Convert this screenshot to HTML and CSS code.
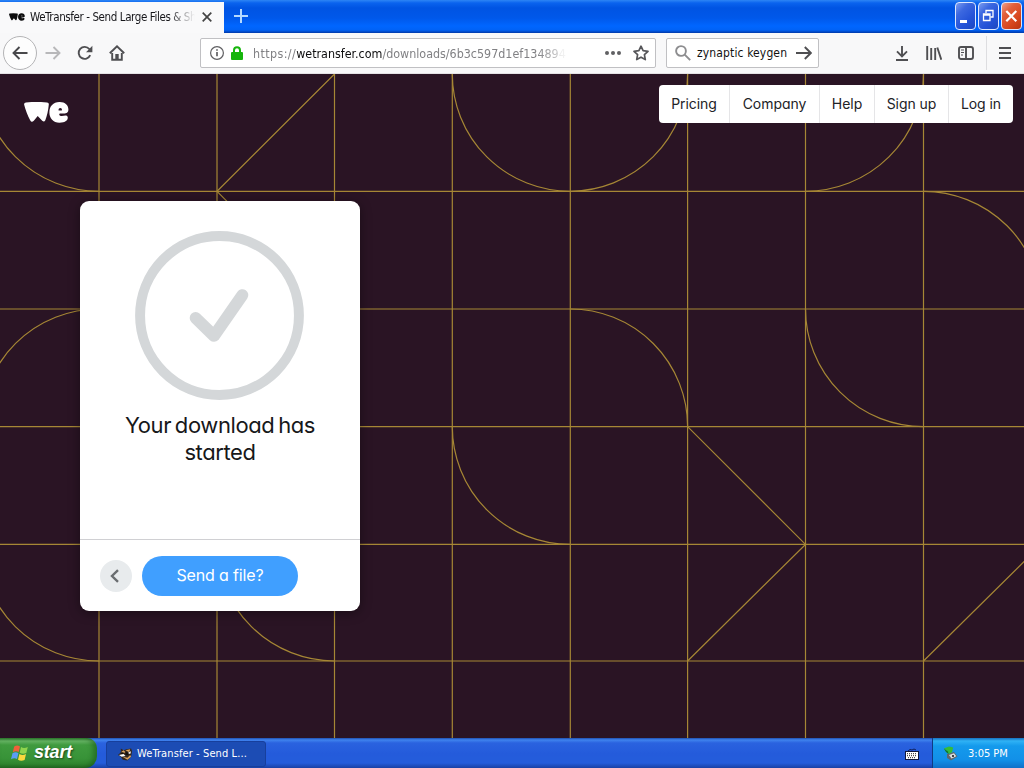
FILE: index.html
```html
<!DOCTYPE html>
<html lang="en">
<head>
<meta charset="utf-8">
<title>WeTransfer - Send Large Files &amp; Share Photos Online</title>
<link rel="stylesheet" href="styles.css">
</head>
<body>
<svg class="defs" width="0" height="0">
  <symbol id="we" viewBox="0 0 45 21">
    <path d="M2 .4Q12 -.6 23 .4Q25 .7 24.8 2.4C24.3 8 23 14 21.3 18.2Q20.2 20.6 18.2 18.8L13.7 14L9.8 18.8Q7.5 21 6.3 18.4C3.7 14 1.2 7 .1 2.5Q0 .6 2 .4Z"/>
    <path d="M35.3 .1C41 -.1 44.4 3.4 44.4 7.6C44.4 10.6 42.4 11.6 40 11.6H36.4C35 11.6 34.8 13.2 36.2 13.7C38.3 14.4 40.2 13.3 42 13.5C44.4 13.9 44.3 17.2 42.2 18.8C40.5 20.2 38.3 20.7 35.4 20.7C29.3 20.7 25.4 16.3 25.4 10.4C25.4 4.2 29.3 .3 35.3 .1ZM36.3 6C35 6 34.4 7.2 34.6 8.6H37.2C38.4 8.6 38.2 6 36.3 6Z" fill-rule="evenodd"/>
  </symbol>
</svg>

<header class="titlebar">
  <div class="tab">
    <svg class="favicon"><use href="#we"/></svg>
    <span class="tab-title">WeTransfer - Send Large Files &amp; Sh</span>
    <svg class="tab-close" viewBox="0 0 10 10"><path d="M.7.7l8.6 8.6M9.3.7L.7 9.3"/></svg>
  </div>
  <svg class="new-tab" viewBox="0 0 14 14"><path d="M7 0v14M0 7h14"/></svg>
  <div class="window-buttons">
    <span class="wbtn"><svg viewBox="0 0 21 28"><path class="solid" d="M5 18h7v3H5z"/></svg></span>
    <span class="wbtn"><svg viewBox="0 0 21 28"><path d="M8 11V8.5h7v6.5h-2.5"/><path d="M5.5 12h6.5v6.5H5.5zM5.5 13h6.5"/></svg></span>
    <span class="wbtn close"><svg viewBox="0 0 21 28"><path class="cross" d="M5.3 9l10 10.3M15.3 9l-10 10.3"/></svg></span>
  </div>
</header>

<div class="toolbar">
  <span class="back"><svg viewBox="0 0 16 16"><path d="M15.5 8H1.5M7.5 2l-6 6 6 6"/></svg></span>
  <svg class="icon forward" viewBox="0 0 16 16"><path d="M.5 8h14M8.5 2l6 6-6 6"/></svg>
  <svg class="icon reload" viewBox="0 0 16 16"><path d="M13.2 10.2A6 6 0 1 1 12.3 4L14 6"/><path class="solid" d="M15.4.8v6.5H9z"/></svg>
  <svg class="icon home" viewBox="0 0 16 16"><path d="M.8 8.3L8 1.3l7.2 7M3.2 8v6.7h9.6V8"/><path class="solid" d="M6.3 15V9h3.4v6z"/></svg>
  <div class="urlbar">
    <svg class="info" viewBox="0 0 14 14"><circle cx="7" cy="7" r="6.4"/><path d="M7 6v4.3M7 3.3v1.5"/></svg>
    <svg class="lock" viewBox="0 0 12 14"><path class="shackle" d="M3 7V4.3a3 3 0 0 1 6 0V7"/><rect y="6" width="12" height="8" rx="1"/></svg>
    <span class="url"><i>https://</i><b>wetransfer.com</b>/downloads/6b3c597d1ef13489<em>4</em></span>
    <svg class="dots" viewBox="0 0 16 4"><circle cx="2" cy="2" r="2"/><circle cx="8" cy="2" r="2"/><circle cx="14" cy="2" r="2"/></svg>
    <svg class="star" viewBox="0 0 16 16"><path d="M8 1.2l2.1 4.5 4.9.6-3.6 3.4.9 4.9L8 12.2l-4.3 2.4.9-4.9L1 6.3l4.9-.6z"/></svg>
  </div>
  <div class="searchbar">
    <svg class="icon glass" viewBox="0 0 16 16"><circle cx="6" cy="6" r="4.9"/><path d="M9.7 9.7l5.5 5.5"/></svg>
    <span class="query">zynaptic keygen</span>
    <svg class="icon go" viewBox="0 0 16 16"><path d="M0 8h15M8.8 2l6 6-6 6"/></svg>
  </div>
  <div class="tools">
    <svg class="icon" viewBox="0 0 16 16"><path d="M8 1v10M3 6.3l5 5 5-5M2 15h12"/></svg>
    <svg class="icon" viewBox="0 0 16 16"><path d="M1.2 1v14M5.2 3v12M9.2 3v12M11.3 2.5l4 12.2"/></svg>
    <svg class="icon" viewBox="0 0 16 16"><rect x="1" y="2" width="14" height="12" rx="2"/><path d="M8 2v12"/><path class="thin" d="M3 5h3M3 7.5h3M3 10h2"/></svg>
    <span class="divider"></span>
    <svg class="icon" viewBox="0 0 16 16"><path d="M2 3h12M2 8h12M2 13h12"/></svg>
  </div>
</div>

<main class="page">
  <svg class="pattern" viewBox="0 74 1024 664">
    <path d="M99 74V738M217 74V738M334.5 74V738M452.3 74V738M570.3 74V738M687.6 74V738M805.5 74V738M923.5 74V738"/>
    <path d="M0 191.3H1024M0 309H1024M0 426.6H1024M0 544.4H1024M0 661H1024"/>
    <path d="M-19 74A118 117.3 0 0 0 99 191.3M334.5 74L217 191.3L334.5 309M452.3 74A118 117.3 0 0 0 570.3 191.3A118 117.3 0 0 0 687.6 74M805.5 191.3A118 117.3 0 0 0 923.5 74M923.5 191.3A118 117.3 0 0 1 1041.5 309M-19 426.6A118 117.6 0 0 1 99 309M570.3 309A117.5 117.6 0 0 1 687.6 426.6L805.5 544.4L687.6 661M805.5 309A118 117.6 0 0 0 923.5 426.6M452.3 426.6A118 117.8 0 0 0 570.3 544.4M-19 544.4A118 116.6 0 0 0 99 661M217 544.4A118 116.6 0 0 0 334.5 661M923.5 661L1041.5 544.4"/>
  </svg>
  <div class="page-top">
    <svg class="logo"><use href="#we"/></svg>
    <nav class="nav">
      <a>Pricing</a><a>Company</a><a>Help</a><a>Sign up</a><a>Log in</a>
    </nav>
  </div>
  <section class="card">
    <div class="card-body">
      <svg class="check" viewBox="0 0 170 170"><circle cx="85" cy="85" r="79.9"/><path d="M61 87.5L79.5 105.5L108 64.5"/></svg>
      <h1>Your download has started</h1>
    </div>
    <div class="card-foot">
      <span class="prev"><svg viewBox="0 0 10 14"><path d="M8 1.2L2 7l6 5.8"/></svg></span>
      <a class="send">Send a file?</a>
    </div>
  </section>
</main>

<footer class="taskbar">
  <div class="start">
    <svg class="flag" viewBox="0 0 18 18"><path fill="#f0603a" d="M3.2 2.6Q6 .6 9 2.4L7.7 8Q5 6.4 1.8 8.2z"/><path fill="#8fd44e" d="M10 3Q13 4.8 16.8 3L15.3 9Q12 10.6 8.7 8.8z"/><path fill="#5b9df5" d="M1.5 9.3Q4.6 7.5 7.4 9.2L6 15Q3.4 13.3 0 15.2z"/><path fill="#fbd83e" d="M8.4 9.9Q11.5 11.8 15 10L13.6 16Q10 17.6 7 15.8z"/></svg>
    <span>start</span>
  </div>
  <div class="task">
    <svg class="badger" viewBox="0 0 16 14"><path fill="#33271f" d="M3 1l3 2 3-1 5-1 1 3-1 6-4 4-5-1-2-3-3-2 3-3z"/><path fill="#d9a05c" d="M3 5l3-2 2 2-4 2zM8 3l5-1-1 3zM5 10l5 1 3-3 1 2-4 3z"/><path fill="#fff" d="M1 8l5-1 2 2-4 1zM10 6l4-2-1 3z"/><path fill="#17110d" d="M3 5h3v2H3zM8 5h3v3H8z"/></svg>
    <span>WeTransfer - Send L...</span>
  </div>
  <svg class="keyboard" viewBox="0 0 14 12"><path d="M3 3l2-1.5L7 2l2-1 2 1" fill="none" stroke="#10205c"/><rect x=".5" y="3.5" width="13" height="8" fill="#fff" stroke="#10183c"/><path d="M2 5.7h10M2 7.7h10M3 9.7h8" stroke="#222" stroke-width="1" stroke-dasharray="1 1"/></svg>
  <div class="tray">
    <svg class="device" viewBox="0 0 15 15"><path fill="#61676b" d="M4 8l7-2 3.5 4.5L8 14.5 4 12z"/><path fill="#d8dee0" d="M6 9l5-1.8 2.3 3L8.5 12.5z"/><path fill="#444" d="M9 9h2v2H9z"/><path fill="#36bd35" d="M.8 2.5L6 .5l4.2 1L9 6.3 5.5 8 5 5.5z"/><path fill="#15791b" d="M.8 2.5L5 5.5 5.5 8 3 6z"/></svg>
    <span>3:05 PM</span>
  </div>
</footer>
</body>
</html>
```

FILE: styles.css
```css
* { box-sizing: border-box; }
body {
  margin: 0;
  width: 1024px;
  height: 768px;
  overflow: hidden;
  display: flex;
  flex-direction: column;
  font-family: "DejaVu Sans Condensed", "DejaVu Sans", sans-serif;
  font-stretch: condensed;
  font-size: 12px;
}
svg { display: block; flex: none; }
.defs { position: absolute; }
span, a { white-space: nowrap; }

/* Window title bar */
.titlebar {
  height: 33px;
  flex: none;
  display: flex;
  align-items: flex-start;
  background: linear-gradient(#2d85f5 0, #0a63ee 3px, #0054e3 8px, #0058ea 18px, #0066ff 26px, #0062f6 30px, #0038a8 33px);
}
.tab {
  width: 224px;
  height: 31px;
  margin-top: 2px;
  display: flex;
  align-items: center;
  background: #f9f9fa;
  padding: 0 0 2px 9px;
}
.favicon { width: 16px; height: 8px; fill: #0c0c0d; }
.tab-title {
  width: 166px;
  margin-left: 5px;
  font-size: 11.5px;
  letter-spacing: -.4px;
  color: #16161a;
  -webkit-mask-image: linear-gradient(90deg, #000 138px, transparent 165px);
  mask-image: linear-gradient(90deg, #000 138px, transparent 165px);
}
.tab-close { width: 10px; height: 10px; margin-left: 6px; stroke: #444; stroke-width: 1.7; }
.new-tab { width: 14px; height: 14px; margin: 9px 0 0 10px; stroke: #b5d9ff; stroke-width: 2; }
.window-buttons { display: flex; gap: 2px; margin: 2px 2px 0 auto; }
.wbtn {
  width: 21px;
  height: 28px;
  border: 1px solid #dce8ff;
  border-radius: 4px;
  background: linear-gradient(135deg, #7c9cf0 0, #3c68e0 30%, #2453d8 65%, #1c48c0);
}
.wbtn svg { width: 21px; height: 28px; margin: -1px; fill: none; stroke: #fff; stroke-width: 1.3; }
.wbtn .solid { fill: #fff; stroke: none; }
.wbtn .cross { stroke-width: 2.2; }
.wbtn.close { background: linear-gradient(135deg, #f0a08a 0, #e2603c 30%, #d9481f 65%, #b83410); }

/* Navigation toolbar */
.toolbar {
  height: 41px;
  flex: none;
  display: flex;
  align-items: center;
  padding-left: 3px;
  background: #f8f8f9;
  border-bottom: 1px solid #e4e2e5;
}
.icon { width: 16px; height: 16px; fill: none; stroke: #4f4f52; stroke-width: 1.9; }
.icon .solid { fill: #4f4f52; stroke: none; }
.icon .thin { stroke-width: 1; }
.back {
  width: 34px;
  height: 34px;
  display: grid;
  place-items: center;
  border: 1px solid #b4b4b6;
  border-radius: 50%;
  background: #fdfdfd;
}
.back svg { width: 16px; height: 16px; fill: none; stroke: #48484b; stroke-width: 1.9; }
.forward { margin-left: 8px; stroke: #b8b8ba; }
.reload { margin-left: 16px; }
.home { margin-left: 16px; }
.urlbar, .searchbar {
  height: 30px;
  display: flex;
  align-items: center;
  background: #fff;
  border: 1px solid #c0c0c3;
  border-radius: 2px;
}
.urlbar { width: 456px; margin-left: 75px; padding-left: 9px; }
.info { width: 14px; height: 14px; fill: none; stroke: #606063; stroke-width: 1.2; }
.info path { stroke-width: 1.7; }
.lock { width: 12px; height: 14px; margin-left: 7px; fill: #16b50c; }
.lock .shackle { fill: none; stroke: #16b50c; stroke-width: 2; }
.url {
  width: 316px;
  margin-left: 10px;
  font-size: 12.4px;
  color: #818184;
  -webkit-mask-image: linear-gradient(90deg, #000 285px, transparent 318px);
  mask-image: linear-gradient(90deg, #000 285px, transparent 318px);
}
.url i { font-style: normal; letter-spacing: .4px; }
.url em { font-style: normal; opacity: .5; }
.url b { font-weight: 400; color: #0c0c0d; }
.dots { width: 16px; height: 4px; margin-left: 36px; fill: #606063; }
.star { width: 16px; height: 16px; margin-left: 12px; fill: none; stroke: #57575a; stroke-width: 1.7; stroke-linejoin: round; }
.searchbar { width: 153px; margin-left: 10px; padding-left: 8px; }
.glass { stroke: #8d8d8f; }
.query { width: 92px; margin-left: 6px; font-size: 12px; letter-spacing: .13px; color: #111; }
.go { margin-left: 7px; }
.tools { display: flex; align-items: center; gap: 16px; margin: 0 11px 0 auto; }
.divider { width: 1px; height: 34px; margin: 0 -5px; background: #dddde0; }
.divider { margin-right: -6px; margin-left: -4px; }

/* Web page */
.page {
  position: relative;
  height: 664px;
  flex: none;
  background: #2a1424;
  font-family: Inter, Roboto, sans-serif;
  font-stretch: normal;
  font-feature-settings: "cv11";
}
.pattern {
  position: absolute;
  inset: 0;
  width: 1024px;
  height: 664px;
  fill: none;
  stroke: #a68735;
  stroke-width: 1.2;
}
.page-top {
  position: relative;
  display: flex;
  justify-content: space-between;
  align-items: flex-start;
  padding: 11px 11px 0 24px;
}
.logo { width: 45px; height: 21px; margin-top: 17px; fill: #fff; }
.nav {
  height: 38px;
  display: grid;
  grid-template-columns: 70px 90px 55px 74px 65px;
  align-items: stretch;
  background: #fff;
  border-radius: 4px;
  overflow: hidden;
}
.nav a {
  display: grid;
  place-items: center;
  padding-bottom: 1px;
  font-size: 14px;
  letter-spacing: -.05px;
  color: #222226;
}
.nav a + a { border-left: 1px solid #e5e5e7; }
.card {
  position: relative;
  width: 280px;
  height: 410px;
  margin: 78px 0 0 80px;
  display: flex;
  flex-direction: column;
  background: #fff;
  border-radius: 9px;
  box-shadow: 0 2px 12px rgba(0, 0, 0, .4);
}
.card-body {
  height: 339px;
  display: flex;
  flex-direction: column;
  align-items: center;
  padding-top: 30px;
  border-bottom: 1px solid #d0d0d3;
}
.check { width: 169px; height: 169px; margin-right: 1px; fill: none; stroke: #d4d7d9; stroke-width: 10; }
.check path { stroke-width: 12; stroke-linecap: round; stroke-linejoin: round; }
h1 {
  width: 215px;
  margin: 12px 0 0;
  font-size: 22px;
  line-height: 27px;
  font-weight: 400;
  letter-spacing: -.4px;
  word-spacing: -2px;
  text-align: center;
  color: #17181a;
}
.card-foot { flex: 1; display: flex; align-items: center; gap: 10px; padding-left: 20px; }
.prev {
  width: 32px;
  height: 32px;
  display: grid;
  place-items: center;
  background: #e8ebed;
  border-radius: 50%;
}
.prev svg { width: 10px; height: 14px; margin-right: 3px; fill: none; stroke: #6a6d70; stroke-width: 2.4; }
.send {
  width: 156px;
  height: 40px;
  display: grid;
  place-items: center;
  padding-bottom: 1px;
  background: #409fff;
  border-radius: 20px;
  font-size: 16px;
  letter-spacing: -.15px;
  color: #fff;
}

/* Taskbar */
.taskbar {
  height: 30px;
  flex: none;
  display: flex;
  align-items: center;
  color: #fff;
  font-size: 11px;
  background: linear-gradient(#1f4fae 0, #3f83ee 2px, #2a62df 5px, #245bdb 16px, #245ddb 25px, #1941a5 30px);
}
.start {
  width: 97px;
  height: 30px;
  display: flex;
  align-items: center;
  gap: 5px;
  padding-left: 11px;
  border-radius: 0 10px 12px 0;
  background: linear-gradient(#2f7d30 0, #67b565 3px, #3f9a3e 7px, #389338 20px, #2f862f 26px, #236b23 30px);
  box-shadow: inset -4px 0 5px rgba(20, 80, 20, .5);
  font: italic bold 18px "Liberation Sans", Arial, sans-serif;
  text-shadow: 1px 1px 2px #1c451c;
}
.start span { margin-top: -1px; letter-spacing: -.2px; }
.flag { width: 18px; height: 18px; }
.task {
  width: 160px;
  height: 26px;
  margin: 1px 0 0 9px;
  display: flex;
  align-items: center;
  gap: 4px;
  padding-left: 11px;
  background: #1c4cb4;
  border: 1px solid #173f9c;
  border-radius: 3px;
  letter-spacing: .1px;
}
.badger { width: 15px; height: 14px; }
.keyboard { width: 14px; height: 12px; margin: 2px 0 0 auto; }
.tray {
  width: 92px;
  height: 30px;
  margin-left: 13px;
  display: flex;
  align-items: center;
  gap: 10px;
  padding-left: 10px;
  border-left: 1px solid #103b83;
  background: linear-gradient(#1670c0 0, #2fb2f5 3px, #149aec 8px, #1290e8 22px, #1170c8 30px);
}
.device { width: 15px; height: 15px; }
```
